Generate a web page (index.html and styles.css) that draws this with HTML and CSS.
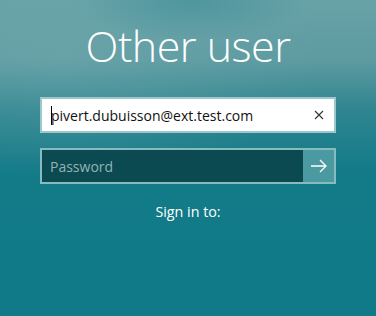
FILE: index.html
```html
<!DOCTYPE html>
<html lang="en">
<head>
  <meta charset="UTF-8">
  <title>Other user</title>
  <link rel="stylesheet" href="styles.css">
</head>
<body>

  <div class="signin">
    <h1 class="title">Other user</h1>

    <div class="field user">
      <span class="caret"></span><span class="value">pivert.dubuisson@ext.test.com</span>
      <button class="clear" aria-label="Clear">
        <svg width="10" height="10" viewBox="0 0 10 10"><path d="M1 1 L9 9 M9 1 L1 9" stroke="#333" stroke-width="1.1" fill="none"/></svg>
      </button>
    </div>

    <div class="field pass">
      <span class="placeholder">Password</span>
      <button class="go" aria-label="Submit">
        <svg width="18" height="14" viewBox="0 0 18 14"><path d="M1 7 H16 M10 1 L16 7 L10 13" stroke="#fff" stroke-width="1.3" fill="none"/></svg>
      </button>
    </div>

    <p class="target">Sign in to:</p>
  </div>

</body>
</html>
```

FILE: styles.css
```css
html, body {
  height:100%;
}

body {
  margin:0;
  font-family:"Open Sans", "Noto Sans", sans-serif;
  color:#fff;
  background:
    radial-gradient(ellipse 120px 40px at 190px 0px, rgba(60,140,150,.6), transparent),
    radial-gradient(ellipse 260px 120px at 60px 60px, rgba(120,175,178,.35), transparent),
    linear-gradient(to bottom, #67a2a7 0px, #5d9ba1 60px, #2f8590 110px, #137b88 170px, #107a88 316px);
  overflow:hidden;
}

.signin {
  width:296px;
  margin:0 auto;
  padding-top:16px;
  display:flex;
  flex-direction:column;
}

.title {
  margin:0 0 22px;
  text-align:center;
  font-weight:300;
  font-size:43px;
  line-height:59px;
  letter-spacing:-.5px;
}

.field {
  box-sizing:border-box;
  height:36px;
  display:flex;
  align-items:center;
  border:2px solid #9cc8cc;
  font-size:14px;
}

.user {
  background:#fff;
  color:#111;
  padding-left:9px;
  margin-bottom:15px;
}

.caret {
  width:1px;
  height:19px;
  background:#000;
}

.value {
  flex:1;
  margin-left:-1px;
}

.clear {
  border:0;
  background:none;
  width:30px;
  height:100%;
  padding:0;
  display:flex;
  align-items:center;
  justify-content:center;
}

.pass {
  background:#0b4a51;
  border-color:#86bcc0;
}

.placeholder {
  flex:1;
  padding-left:8px;
  color:#90b4b7;
}

.go {
  border:0;
  background:#4b9aa1;
  width:31px;
  height:100%;
  padding:0;
  display:flex;
  align-items:center;
  justify-content:center;
}

.target {
  margin:18px 0 0;
  text-align:center;
  font-size:14.3px;
}
```
